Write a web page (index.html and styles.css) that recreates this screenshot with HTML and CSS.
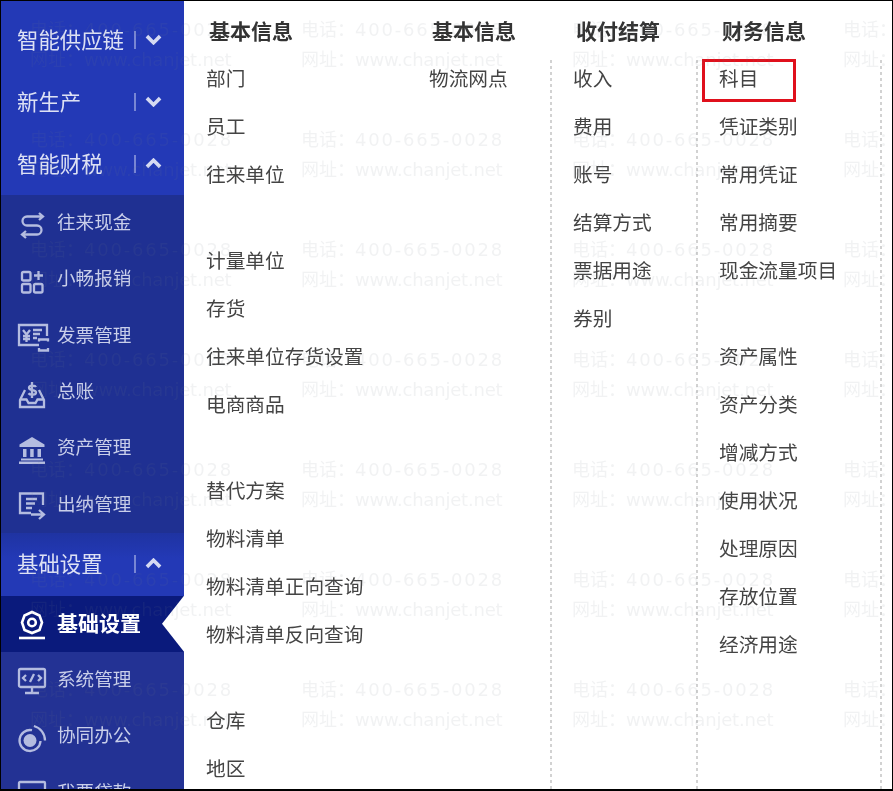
FILE: index.html
```html
<!DOCTYPE html>
<html lang="zh-CN">
<head>
<meta charset="utf-8">
<title>基础设置</title>
<link rel="stylesheet" href="styles.css">
</head>
<body>
<div class="frame">
  <nav class="sidebar">
    <div class="head"><span class="head-text">智能供应链</span><span class="sep"></span><svg class="chev" viewBox="0 0 16 10"><path d="M1.800 1.800 8 8l6.200-6.200"/></svg></div>
    <div class="head"><span class="head-text">新生产</span><span class="sep"></span><svg class="chev" viewBox="0 0 16 10"><path d="M1.800 1.800 8 8l6.200-6.200"/></svg></div>
    <div class="head"><span class="head-text">智能财税</span><span class="sep"></span><svg class="chev" viewBox="0 0 16 10"><path d="M1.800 8.200 8 2l6.200 6.200"/></svg></div>
    <ul class="subs">
      <li class="sub"><svg class="ico" viewBox="0 0 28 28"><path d="M21 2 25 5.500l-4 3.500M25 5.500H9a4.500 4.500 0 0 0 0 9h10a4.500 4.500 0 0 1 0 9H4M8 20 4 23.500 8 27"/></svg><span class="sub-text">往来现金</span></li>
      <li class="sub"><svg class="ico" viewBox="0 0 28 28"><rect x="4" y="5" width="8.500" height="8.500" rx="1.500"/><rect x="4" y="17" width="8.500" height="8.500" rx="1.500"/><rect x="16" y="17" width="8.500" height="8.500" rx="1.500"/><path d="M20.500 4v9M16 8.500h9"/></svg><span class="sub-text">小畅报销</span></li>
      <li class="sub"><svg class="ico" viewBox="0 0 28 28"><path d="M21 22H1V2h28v11"/><path d="M5 7l3.500 4.500L12 7M8.500 11.500V19M5 13h7M5 16h7M15 7h9M15 11h7M15 15h4"/><path d="M21 18.500V16.500h9v2M21 25v2.500h9V25"/></svg><span class="sub-text">发票管理</span></li>
      <li class="sub"><svg class="ico" viewBox="0 0 28 28"><path d="M7 10 2 20v7h24v-7l-5-10"/><path d="M2 19.500h6.500l2 3.500h7l2-3.500H26"/><path d="M18 7c-1-2-7-2-7 .8 0 3.200 7 1.400 7 4.600 0 2.800-6 2.800-7.500.8M14 2v16"/></svg><span class="sub-text">总账</span></li>
      <li class="sub"><svg class="ico solid" viewBox="0 0 28 28"><path d="M14 1 26.500 8.500V11H1.500V8.500z"/><rect x="5" y="13" width="3.500" height="8"/><rect x="12.200" y="13" width="3.500" height="8"/><rect x="19.500" y="13" width="3.500" height="8"/><rect x="3" y="22.500" width="22" height="2"/><rect x="1" y="25.500" width="26" height="2.500"/></svg><span class="sub-text">资产管理</span></li>
      <li class="sub"><svg class="ico" viewBox="0 0 28 28"><path d="M13 21H2V1.500h23V13"/><path d="M8 7h11M8 11.500h9M8 16h6"/><path d="M13 22.500h13M21 18l5 4.500-5 4.500"/></svg><span class="sub-text">出纳管理</span></li>
    </ul>
    <div class="head head-tall"><span class="head-text">基础设置</span><span class="sep"></span><svg class="chev" viewBox="0 0 16 10"><path d="M1.800 8.200 8 2l6.200 6.200"/></svg></div>
    <ul class="subs light">
      <li class="sub active"><svg class="ico" viewBox="0 0 28 28"><path d="M14 1 21.500 4.500 24 11.500 21.500 19 14 22 6.500 19 4 11.500 6.500 4.500z"/><circle cx="14" cy="11.500" r="3.800"/><path d="M1 27h26"/></svg><span class="sub-text">基础设置</span></li>
      <li class="sub"><svg class="ico" viewBox="0 0 28 28"><rect x="1" y="2" width="26" height="18" rx="1.500"/><path d="M8 8l-3 3 3 3M20 8l3 3-3 3M16 7l-4 8M14 20v5M7 26h14"/></svg><span class="sub-text">系统管理</span></li>
      <li class="sub"><svg class="ico" viewBox="0 0 28 28"><path d="M22.500 17A10.500 10.500 0 1 1 14 6.200"/><path d="M15.900 2A15 15 0 0 1 27 16.500"/><circle class="fill" cx="12" cy="16.500" r="6.500"/></svg><span class="sub-text">协同办公</span></li>
      <li class="sub"><svg class="ico" viewBox="0 0 28 28"><rect x="1" y="2" width="26" height="18" rx="1"/></svg><span class="sub-text">我要贷款</span></li>
    </ul>
  </nav>
  <main class="panel">
    <section class="col col-a">
      <h3 class="title">基本信息</h3>
      <div class="list">
        <ul class="group"><li>部门</li><li>员工</li><li>往来单位</li></ul>
        <ul class="group"><li>计量单位</li><li>存货</li><li>往来单位存货设置</li><li>电商商品</li></ul>
        <ul class="group"><li>替代方案</li><li>物料清单</li><li>物料清单正向查询</li><li>物料清单反向查询</li></ul>
        <ul class="group"><li>仓库</li><li>地区</li></ul>
      </div>
    </section>
    <section class="col col-b">
      <h3 class="title">基本信息</h3>
      <div class="list">
        <ul class="group"><li>物流网点</li></ul>
      </div>
    </section>
    <section class="col col-c">
      <h3 class="title">收付结算</h3>
      <div class="list ruled">
        <ul class="group"><li>收入</li><li>费用</li><li>账号</li><li>结算方式</li><li>票据用途</li><li>券别</li></ul>
      </div>
    </section>
    <section class="col col-d">
      <h3 class="title">财务信息</h3>
      <div class="list ruled">
        <ul class="group"><li class="boxed">科目</li><li>凭证类别</li><li>常用凭证</li><li>常用摘要</li><li>现金流量项目</li></ul>
        <ul class="group"><li>资产属性</li><li>资产分类</li><li>增减方式</li><li>使用状况</li><li>处理原因</li><li>存放位置</li><li>经济用途</li></ul>
      </div>
    </section>
    <div class="col-end"></div>
  </main>
  <div class="marks" aria-hidden="true">
    <p>电话：<span>400-665-0028</span><br>网址：<i>www.chanjet.net</i></p><p>电话：<span>400-665-0028</span><br>网址：<i>www.chanjet.net</i></p><p>电话：<span>400-665-0028</span><br>网址：<i>www.chanjet.net</i></p><p>电话：<span>400-665-0028</span><br>网址：<i>www.chanjet.net</i></p>
    <p>电话：<span>400-665-0028</span><br>网址：<i>www.chanjet.net</i></p><p>电话：<span>400-665-0028</span><br>网址：<i>www.chanjet.net</i></p><p>电话：<span>400-665-0028</span><br>网址：<i>www.chanjet.net</i></p><p>电话：<span>400-665-0028</span><br>网址：<i>www.chanjet.net</i></p>
    <p>电话：<span>400-665-0028</span><br>网址：<i>www.chanjet.net</i></p><p>电话：<span>400-665-0028</span><br>网址：<i>www.chanjet.net</i></p><p>电话：<span>400-665-0028</span><br>网址：<i>www.chanjet.net</i></p><p>电话：<span>400-665-0028</span><br>网址：<i>www.chanjet.net</i></p>
    <p>电话：<span>400-665-0028</span><br>网址：<i>www.chanjet.net</i></p><p>电话：<span>400-665-0028</span><br>网址：<i>www.chanjet.net</i></p><p>电话：<span>400-665-0028</span><br>网址：<i>www.chanjet.net</i></p><p>电话：<span>400-665-0028</span><br>网址：<i>www.chanjet.net</i></p>
    <p>电话：<span>400-665-0028</span><br>网址：<i>www.chanjet.net</i></p><p>电话：<span>400-665-0028</span><br>网址：<i>www.chanjet.net</i></p><p>电话：<span>400-665-0028</span><br>网址：<i>www.chanjet.net</i></p><p>电话：<span>400-665-0028</span><br>网址：<i>www.chanjet.net</i></p>
    <p>电话：<span>400-665-0028</span><br>网址：<i>www.chanjet.net</i></p><p>电话：<span>400-665-0028</span><br>网址：<i>www.chanjet.net</i></p><p>电话：<span>400-665-0028</span><br>网址：<i>www.chanjet.net</i></p><p>电话：<span>400-665-0028</span><br>网址：<i>www.chanjet.net</i></p>
    <p>电话：<span>400-665-0028</span><br>网址：<i>www.chanjet.net</i></p><p>电话：<span>400-665-0028</span><br>网址：<i>www.chanjet.net</i></p><p>电话：<span>400-665-0028</span><br>网址：<i>www.chanjet.net</i></p><p>电话：<span>400-665-0028</span><br>网址：<i>www.chanjet.net</i></p>
  </div>
</div>
</body>
</html>
```
FILE: styles.css
```css
* { box-sizing: border-box; }
html, body { margin: 0; padding: 0; background: #fff; }
ul { list-style: none; margin: 0; padding: 0; }
.frame {
  position: relative;
  display: flex;
  width: 893px;
  height: 791px;
  overflow: hidden;
  border: solid #000;
  border-width: 1px 1px 2px 1px;
  background: #fff;
  font-family: "Noto Sans CJK SC", "Noto Sans", sans-serif;
  filter: blur(0.35px);
}
.sidebar {
  flex: 0 0 183px;
  width: 183px;
  background: #2339b6;
  color: #dde1f4;
  padding-top: 8px;
}
.head {
  position: relative;
  display: flex;
  align-items: center;
  height: 62px;
  padding-left: 16px;
  font-size: 21.4px;
  line-height: 30px;
}
.head-tall { height: 63px; background: linear-gradient(#1f33a2, #2339b6 40%); }
.head-text { flex: 1 1 auto; white-space: nowrap; margin-top: -2px; }
.sep {
  position: absolute;
  left: 133px;
  top: 22px;
  width: 1.5px;
  height: 18px;
  background: #7886d4;
}
.chev {
  position: absolute;
  left: 144px;
  top: 25px;
  width: 17px;
  height: 11px;
  fill: none;
  stroke: #d5daf2;
  stroke-width: 3.4px;
}
.subs { background: #1f3092; }
.subs.light { background: #233294; }
.sub {
  position: relative;
  display: flex;
  align-items: center;
  gap: 11px;
  height: 56.3px;
  padding-left: 17px;
  color: #c9cfea;
  font-size: 18.6px;
}
.sub-text { white-space: nowrap; margin-top: -4px; line-height: 28px; }
.ico {
  flex: 0 0 28px;
  width: 28px;
  height: 28px;
  fill: none;
  stroke: #b4bce0;
  stroke-width: 2.3px;
  margin-top: 3px;
  overflow: visible;
}
.ico.solid { fill: #b4bce0; stroke: none; }
.ico .fill { fill: #b4bce0; stroke: none; }
.active {
  height: 56px;
  background: #0a1a7c;
  color: #fff;
  font-weight: 700;
  font-size: 21px;
}
.active .ico { stroke: #fff; stroke-width: 2.6px; }
.active::after {
  content: "";
  position: absolute;
  right: 0;
  top: 0;
  width: 22px;
  height: 100%;
  background: #fff;
  clip-path: polygon(100% 0, 0 50%, 100% 100%);
}
.panel {
  flex: 1 1 auto;
  display: grid;
  grid-template-columns: 245px 121px 146px 184px 1fr;
  color: #444;
  font-size: 19.7px;
}
.title {
  margin: 0;
  height: 59px;
  padding: 14px 0 0 25px;
  line-height: 30px;
  font-size: 21px;
  font-weight: 700;
  color: #333;
  white-space: nowrap;
}
.list { height: 740px; }
.ruled, .col-end {
  background: repeating-linear-gradient(#d2d2d2 0 3px, transparent 3px 6px) left top / 2px 100% no-repeat;
}
.group { margin-bottom: 50px; padding-left: 22px; }
.ruled .group { padding-left: 23px; }
.group li {
  height: 36px;
  margin-bottom: 12px;
  line-height: 35px;
  white-space: nowrap;
}
.col-b .title { padding-left: 3px; }
.col-b .group { padding-left: 0; }
.col-c .title { padding-left: 26px; }
.col-d .title { padding-left: 26px; }
.col-end { margin-top: 59px; }
.boxed { position: relative; }
.boxed::after {
  content: "";
  position: absolute;
  left: -17px;
  top: -1px;
  width: 88px;
  height: 37px;
  border: 3px solid #e0101c;
}
.marks {
  position: absolute;
  left: 29px;
  top: 14px;
  display: grid;
  grid-template-columns: repeat(4, 271px);
  grid-auto-rows: 110px;
  pointer-events: none;
}
.marks p {
  margin: 0;
  font-family: "DejaVu Sans", "Noto Sans CJK SC", sans-serif;
  font-size: 18px;
  line-height: 30px;
  color: rgba(120, 125, 140, 0.1);
  white-space: nowrap;
}
.marks span { letter-spacing: 1.8px; }
.marks i { font-style: normal; letter-spacing: -0.2px; }
```
